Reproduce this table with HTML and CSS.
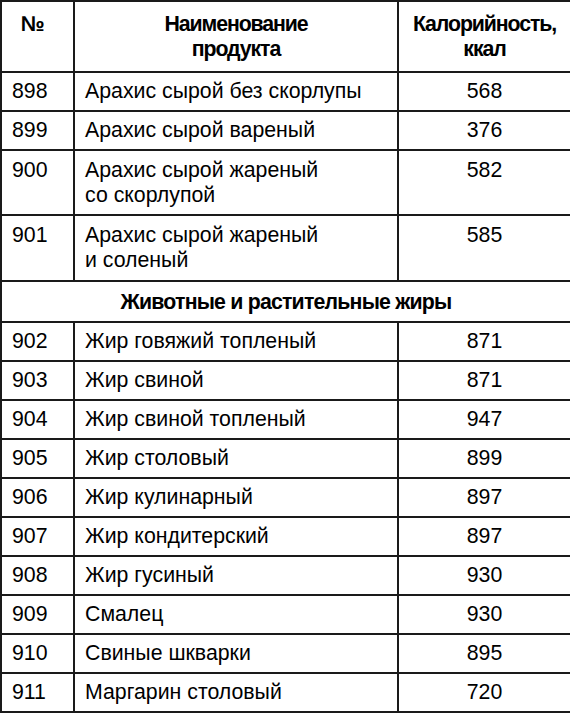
FILE: index.html
```html
<!DOCTYPE html>
<html lang="ru">
<head>
<meta charset="utf-8">
<title>Калорийность</title>
<link rel="stylesheet" href="styles.css">
</head>
<body>
<table class="cal">
  <colgroup>
    <col class="c-num">
    <col class="c-name">
    <col class="c-kcal">
  </colgroup>
  <thead>
    <tr class="head">
      <th class="num">№</th>
      <th class="name">Наименование<br>продукта</th>
      <th class="kcal">Калорийность,<br>ккал</th>
    </tr>
  </thead>
  <tbody>
    <tr><td class="num">898</td><td class="name">Арахис сырой без скорлупы</td><td class="kcal">568</td></tr>
    <tr><td class="num">899</td><td class="name">Арахис сырой вареный</td><td class="kcal">376</td></tr>
    <tr class="two"><td class="num">900</td><td class="name">Арахис сырой жареный<br>со скорлупой</td><td class="kcal">582</td></tr>
    <tr class="two tall"><td class="num">901</td><td class="name">Арахис сырой жареный<br>и соленый</td><td class="kcal">585</td></tr>
    <tr class="section"><td colspan="3">Животные и растительные жиры</td></tr>
    <tr><td class="num">902</td><td class="name">Жир говяжий топленый</td><td class="kcal">871</td></tr>
    <tr><td class="num">903</td><td class="name">Жир свиной</td><td class="kcal">871</td></tr>
    <tr><td class="num">904</td><td class="name">Жир свиной топленый</td><td class="kcal">947</td></tr>
    <tr><td class="num">905</td><td class="name">Жир столовый</td><td class="kcal">899</td></tr>
    <tr><td class="num">906</td><td class="name">Жир кулинарный</td><td class="kcal">897</td></tr>
    <tr><td class="num">907</td><td class="name">Жир кондитерский</td><td class="kcal">897</td></tr>
    <tr><td class="num">908</td><td class="name">Жир гусиный</td><td class="kcal">930</td></tr>
    <tr><td class="num">909</td><td class="name">Смалец</td><td class="kcal">930</td></tr>
    <tr><td class="num">910</td><td class="name">Свиные шкварки</td><td class="kcal">895</td></tr>
    <tr><td class="num">911</td><td class="name">Маргарин столовый</td><td class="kcal">720</td></tr>
  </tbody>
</table>
</body>
</html>
```
FILE: styles.css
```css
html, body {
  margin: 0;
  padding: 0;
  background: #ffffff;
}

.cal {
  border-collapse: collapse;
  width: 570px;
  table-layout: fixed;
  font-family: "Liberation Sans", Arial, sans-serif;
  font-size: 21.3px;
  color: #000000;
  line-height: 25px;
}

.c-num { width: 73px; }
.c-name { width: 324px; }
.c-kcal { width: 173px; }

.cal th,
.cal td {
  border: 2px solid #1a1a1a;
  vertical-align: top;
  padding: 6px 10px 6px 10px;
}

.cal th {
  font-weight: bold;
  text-align: center;
  letter-spacing: -1.1px;
  padding-top: 10px;
  padding-bottom: 9px;
}

.cal .name {
  text-align: left;
}

.cal th.name {
  text-align: center;
}

.cal .kcal {
  text-align: center;
  padding-left: 6px;
  padding-right: 6px;
}

.cal .num {
  text-align: left;
  padding-left: 10px;
}

.cal th.num {
  text-align: center;
  padding-left: 0;
  letter-spacing: 0;
}

.cal .two td {
  padding-top: 7px;
  padding-bottom: 6px;
}

.cal .two.tall td {
  padding-bottom: 7px;
}

.cal .section td {
  font-weight: bold;
  text-align: center;
  letter-spacing: -0.8px;
  padding-top: 8px;
  padding-bottom: 6px;
}
```
